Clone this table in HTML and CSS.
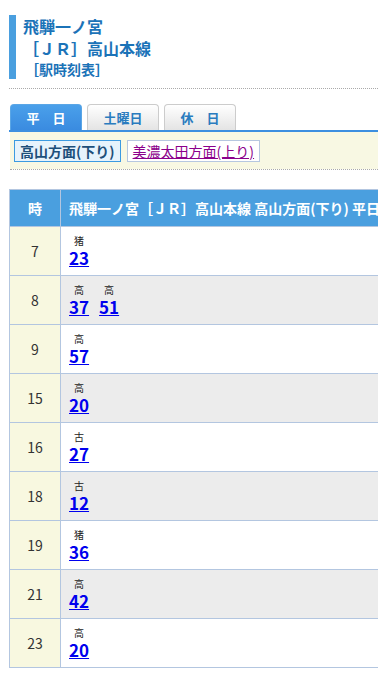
FILE: index.html
```html
<!DOCTYPE html>
<html lang="ja">
<head>
<meta charset="utf-8">
<link rel="stylesheet" href="styles.css">
</head>
<body>
<div class="page">
  <div class="title">
    <div class="t1">飛騨一ノ宮</div>
    <div class="t2">［ＪＲ］高山本線</div>
    <div class="t3">［駅時刻表］</div>
  </div>
  <div class="dots"></div>
  <div class="tabs">
    <div class="tab active">平　日</div>
    <div class="tab">土曜日</div>
    <div class="tab">休　日</div>
  </div>
  <div class="panel">
    <span class="dir cur">高山方面(下り)</span>
    <span class="dir"><a href="#">美濃太田方面(上り)</a></span>
  </div>
  <div class="dots"></div>
  <table class="tt">
    <tr class="head"><th class="h">時</th><th class="m">飛騨一ノ宮［ＪＲ］高山本線 高山方面(下り) 平日</th></tr>
    <tr><td class="h">7</td><td class="m"><span class="mn"><span class="k">猪</span><a href="#">23</a></span></td></tr>
    <tr class="alt"><td class="h">8</td><td class="m"><span class="mn"><span class="k">高</span><a href="#">37</a></span><span class="mn"><span class="k">高</span><a href="#">51</a></span></td></tr>
    <tr><td class="h">9</td><td class="m"><span class="mn"><span class="k">高</span><a href="#">57</a></span></td></tr>
    <tr class="alt"><td class="h">15</td><td class="m"><span class="mn"><span class="k">高</span><a href="#">20</a></span></td></tr>
    <tr><td class="h">16</td><td class="m"><span class="mn"><span class="k">古</span><a href="#">27</a></span></td></tr>
    <tr class="alt"><td class="h">18</td><td class="m"><span class="mn"><span class="k">古</span><a href="#">12</a></span></td></tr>
    <tr><td class="h">19</td><td class="m"><span class="mn"><span class="k">猪</span><a href="#">36</a></span></td></tr>
    <tr class="alt"><td class="h">21</td><td class="m"><span class="mn"><span class="k">高</span><a href="#">42</a></span></td></tr>
    <tr><td class="h">23</td><td class="m"><span class="mn"><span class="k">高</span><a href="#">20</a></span></td></tr>
  </table>
</div>
</body>
</html>
```
FILE: styles.css
```css
html, body { margin: 0; padding: 0; overflow: hidden; background: #fff; }
body { font-family: "Noto Sans CJK JP", "Noto Sans", sans-serif; color: #333; }
.page { padding: 15px 0 0 9px; width: 700px; }
.title { border-left: 7px solid #4a9fdf; padding-left: 7px; color: #1b73b8; font-weight: bold; }
.t1, .t2 { font-size: 16px; line-height: 22px; }
.t3 { font-size: 14px; line-height: 20px; padding-left: 2px; }
.dots { border-top: 1px dotted #aaa; width: 369px; }
.title + .dots { margin-top: 9px; }
.tabs { display: flex; gap: 5px; margin-top: 15px; padding-left: 1px; width: 368px; border-bottom: 2px solid #3d8fe0; }
.tab { width: 70px; height: 25px; border: 1px solid #ccc; border-bottom: none; border-radius: 4px 4px 0 0; background: linear-gradient(#ffffff, #e4e4e4); color: #2a7cbf; font-weight: bold; font-size: 13px; line-height: 25px; text-align: center; }
.tab.active { background: linear-gradient(#4aa0ea, #3a8be0); border-color: #5aa6e6; color: #fff; }
.panel { background: #f8f8e3; width: 368px; margin-left: 1px; height: 37px; display: flex; align-items: center; gap: 6px; padding-left: 4px; box-sizing: border-box; }
.dir { height: 22px; box-sizing: border-box; padding: 0 5px; font-size: 14px; line-height: 20px; border: 1px solid #b6c7e0; background: #fff; }
.dir.cur { border-color: #3b9ae1; background: #e6f3fc; color: #1d4f7a; font-weight: bold; }
.dir a { color: #8b008b; }
.panel + .dots { margin-left: 1px; width: 368px; }
.tt { margin-top: 19px; border-collapse: collapse; }
.tt th, .tt td { border: 1px solid #b3c6e0; padding: 0; }
.tt .head th { background: #4a9fdf; color: #fff; font-weight: bold; font-size: 14px; height: 36px; white-space: nowrap; }
.tt th.h { width: 50px; }
.tt th.m { text-align: left; padding-left: 8px; padding-right: 20px; }
.tt td { height: 48px; }
.tt td.h { background: #f8f8e0; text-align: center; font-size: 14px; color: #333; }
.tt td.m { padding-left: 8px; vertical-align: middle; }
.tt tr.alt td.m { background: #ececec; }
.mn { display: inline-flex; flex-direction: column; align-items: center; margin-right: 10px; vertical-align: middle; }
.k { font-size: 10px; line-height: 14px; color: #222; }
.mn a { color: #0000ee; font-weight: bold; font-size: 17px; line-height: 20px; text-decoration: underline; }
```
